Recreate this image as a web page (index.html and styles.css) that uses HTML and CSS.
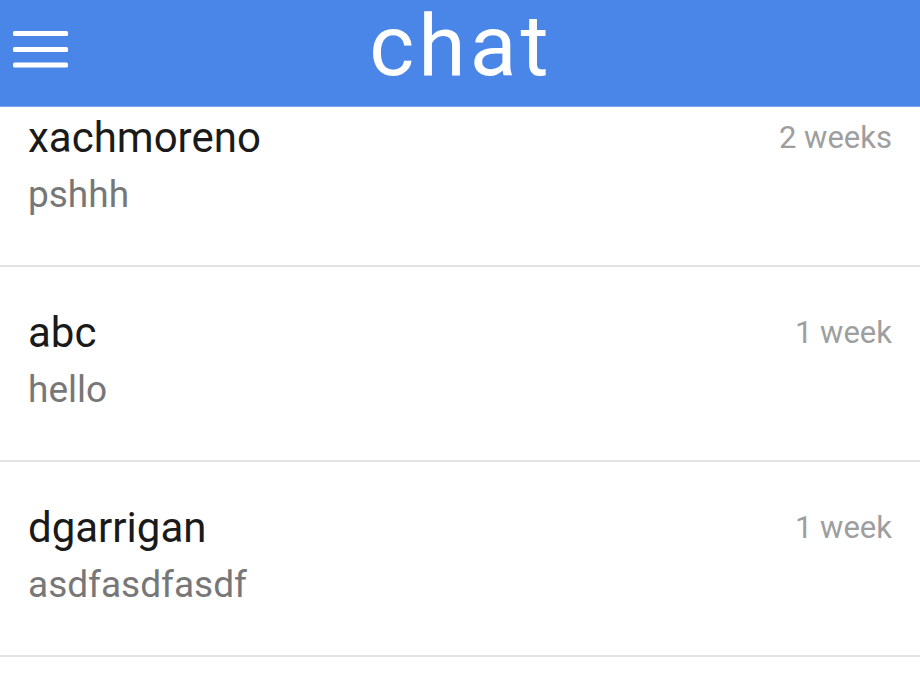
FILE: index.html
```html
<!DOCTYPE html>
<html>
<head>
<meta charset="utf-8">
<link rel="stylesheet" href="styles.css">
</head>
<body>
<div class="app">
  <header class="bar">
    <button class="menu" aria-label="menu">
      <svg width="56" height="40" viewBox="0 0 56 40">
        <rect x="0" y="0" width="55" height="5" rx="1.5" fill="#fff"/>
        <rect x="0" y="16" width="55" height="5" rx="1.5" fill="#fff"/>
        <rect x="0" y="31.5" width="55" height="5" rx="1.5" fill="#fff"/>
      </svg>
    </button>
    <h1 class="title">chat</h1>
  </header>
  <ul class="list">
    <li class="row">
      <div class="top"><span class="name">xachmoreno</span><span class="time">2 weeks</span></div>
      <div class="msg">pshhh</div>
    </li>
    <li class="row">
      <div class="top"><span class="name">abc</span><span class="time">1 week</span></div>
      <div class="msg">hello</div>
    </li>
    <li class="row">
      <div class="top"><span class="name">dgarrigan</span><span class="time">1 week</span></div>
      <div class="msg">asdfasdfasdf</div>
    </li>
  </ul>
</div>
</body>
</html>
```
FILE: styles.css
```css
* { box-sizing: border-box; }
html, body { margin: 0; padding: 0; background: #fff; }
body { font-family: Roboto, "Liberation Sans", sans-serif; overflow: hidden; }
.app { width: 920px; height: 680px; overflow: hidden; }
.bar {
  position: relative;
  z-index: 2;
  height: 107px;
  background: #4a86e8;
  display: flex;
  align-items: center;
  justify-content: center;
  border-bottom: 1px solid #7aa6ee;
}
.menu {
  position: absolute;
  left: 13px;
  top: 31px;
  padding: 0;
  border: 0;
  background: none;
  line-height: 0;
}
.title {
  margin: 0;
  color: #fff;
  font-weight: 400;
  font-size: 86px;
  line-height: 88px;
  letter-spacing: 4px;
  padding-bottom: 14px;
  padding-left: 2px;
}
.list {
  list-style: none;
  margin: -35px 0 0;
  padding: 0;
  position: relative;
  z-index: 1;
}
.row {
  height: 195px;
  padding: 42px 28px 0 28px;
  border-bottom: 2px solid #e2e2e2;
}
.top {
  display: flex;
  justify-content: space-between;
  align-items: flex-start;
}
.name {
  font-size: 42px;
  line-height: 48px;
  color: #1a1a1a;
}
.time {
  font-size: 31px;
  line-height: 40px;
  margin-top: 4px;
  color: #9e9e9e;
}
.msg {
  margin-top: 11px;
  font-size: 37px;
  line-height: 44px;
  color: #777;
}
```
